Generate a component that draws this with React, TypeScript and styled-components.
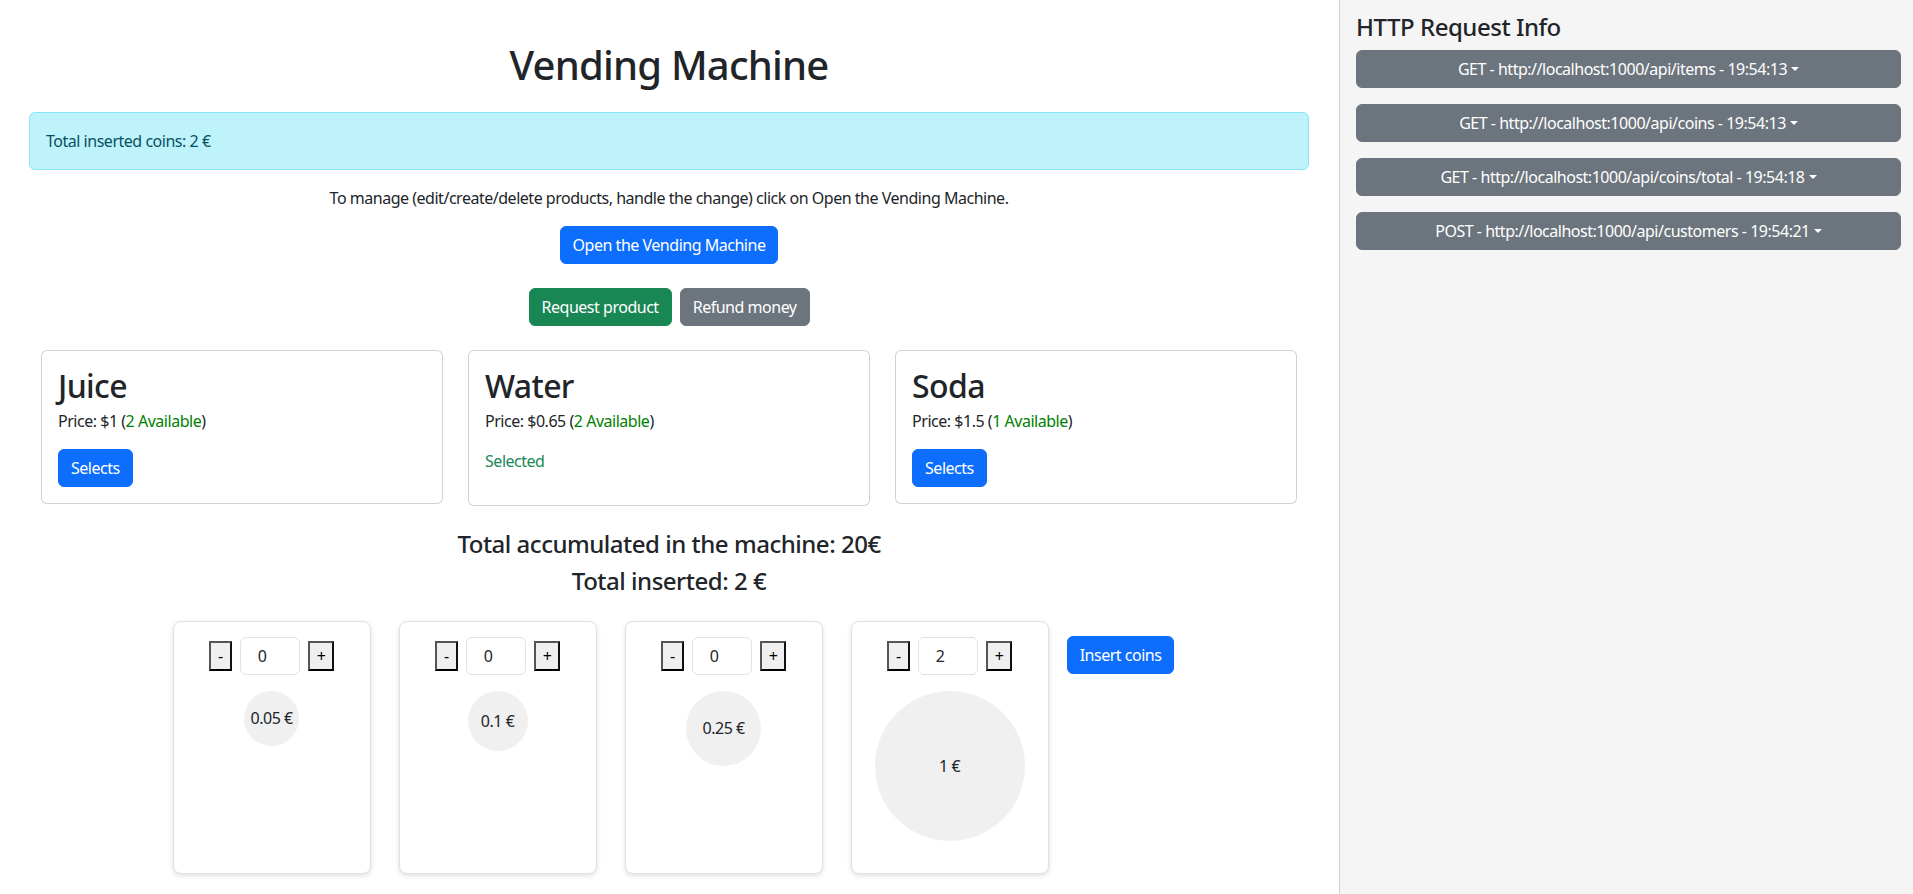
import React from 'react';
import styled, { createGlobalStyle } from 'styled-components';

const colors = {
  text: '#212529',
  primary: '#0d6efd',
  success: '#198754',
  secondary: '#6c757d',
  border: 'rgba(0, 0, 0, 0.175)',
  sidebar: '#f5f5f5',
};

const GlobalStyle = createGlobalStyle`
  * {
    box-sizing: border-box;
  }

  body {
    margin: 0;
    font-family: 'Noto Sans', 'Open Sans', sans-serif;
    font-size: 16px;
    line-height: 1.5;
    letter-spacing: -0.03em;
    color: ${colors.text};
    background: #fff;
  }

  button,
  input {
    letter-spacing: inherit;
  }
`;

const Layout = styled('div')`
  display: grid;
  grid-template-columns: 70% 30%;
  min-height: 100vh;
`;

const Main = styled('main')`
  padding: 41px 30px 16px 29px;
`;

const Title = styled('h1')`
  margin: 0 0 23px;
  font-size: 40px;
  font-weight: 500;
  line-height: 1.2;
  letter-spacing: -0.02em;
  text-align: center;
`;

const Alert = styled('div')`
  padding: 16px;
  margin-bottom: 16px;
  border: 1px solid #86e5f7;
  border-radius: 6px;
  background: #bff3fc;
  color: #055160;
`;

const Hint = styled('p')`
  margin: 0 0 16px;
  text-align: center;
`;

const ButtonRow = styled('div')`
  display: flex;
  justify-content: center;
  gap: 8px;
  margin-bottom: 24px;
`;

type Variant = 'primary' | 'success' | 'secondary';

const Button = styled('button')<{ $variant: Variant }>`
  display: inline-block;
  padding: 6px 12px;
  border: 1px solid ${props => colors[props.$variant]};
  border-radius: 6px;
  background: ${props => colors[props.$variant]};
  color: #fff;
  font-family: inherit;
  font-size: 16px;
  line-height: 24px;
  cursor: pointer;
`;

const ProductGrid = styled('div')`
  display: grid;
  grid-template-columns: repeat(3, 1fr);
  gap: 25px;
  align-items: start;
  margin: 0 12px 24px;
`;

const Card = styled('div')`
  padding: 16px;
  border: 1px solid ${colors.border};
  border-radius: 6px;
  background: #fff;
`;

const CardTitle = styled('h2')`
  margin: 0 0 4px;
  font-size: 32px;
  font-weight: 500;
  line-height: 1.2;
  letter-spacing: -0.02em;
`;

const CardText = styled('p')`
  margin: 0 0 16px;
`;

const Available = styled('span')`
  color: green;
`;

const SelectedText = styled('p')`
  margin: 0 0 16px;
  color: ${colors.success};
`;

const Total = styled('h4')`
  margin: 0 0 8px;
  font-size: 24px;
  font-weight: 500;
  line-height: 1.2;
  letter-spacing: -0.02em;
  text-align: center;
`;

const CoinRow = styled('div')`
  display: flex;
  justify-content: center;
  align-items: stretch;
  gap: 28px;
  margin-top: 25px;
  padding-left: 9px;
`;

const CoinCard = styled('div')`
  display: flex;
  flex-direction: column;
  align-items: center;
  width: 198px;
  padding: 15px 16px 16px;
  border: 1px solid #dee2e6;
  border-radius: 8px;
  background: #fff;
  box-shadow: 0 2px 5px rgba(0, 0, 0, 0.12);
`;

const Controls = styled('div')`
  display: flex;
  align-items: center;
  gap: 8px;
`;

const StepButton = styled('button')`
  min-width: 23px;
  height: 30px;
  padding: 0 7px;
  border: 2px solid;
  border-color: #555 #111 #000 #555;
  background: #efefef;
  color: #000;
  font-family: inherit;
  font-size: 16px;
  line-height: 1;
`;

const CountInput = styled('input')`
  width: 60px;
  height: 38px;
  padding: 6px 8px 6px 17px;
  border: 1px solid #dee2e6;
  border-radius: 6px;
  color: ${colors.text};
  font-family: inherit;
  font-size: 16px;
`;

const Coin = styled('div')`
  display: flex;
  align-items: center;
  justify-content: center;
  margin: 16px 0;
  border-radius: 50%;
  background: #f0f0f0;
  font-size: 16px;
`;

const InsertButton = styled(Button)`
  align-self: flex-start;
  margin: 15px 0 0 -10px;
`;

const Sidebar = styled('aside')`
  padding: 13px 12px 13px 16px;
  border-left: 1px solid #cfcfcf;
  background: ${colors.sidebar};
`;

const SidebarTitle = styled('h4')`
  margin: 0 0 8px;
  font-size: 24px;
  font-weight: 500;
  line-height: 1.2;
  letter-spacing: -0.02em;
`;

const RequestToggle = styled('button')`
  display: block;
  width: 100%;
  margin-bottom: 16px;
  padding: 6px 12px;
  border: 1px solid ${colors.secondary};
  border-radius: 6px;
  background: ${colors.secondary};
  color: #fff;
  font-family: inherit;
  font-size: 16px;
  line-height: 24px;
  text-align: center;

  &::after {
    content: '';
    display: inline-block;
    margin-left: 0.255em;
    vertical-align: 0.255em;
    border-top: 0.3em solid;
    border-right: 0.3em solid transparent;
    border-left: 0.3em solid transparent;
  }
`;

const products = [
  { name: 'Juice', price: 1, available: 2, selected: false },
  { name: 'Water', price: 0.65, available: 2, selected: true },
  { name: 'Soda', price: 1.5, available: 1, selected: false },
];

const coins = [
  { value: 0.05, count: 0 },
  { value: 0.1, count: 0 },
  { value: 0.25, count: 0 },
  { value: 1, count: 2 },
];

const requests = [
  'GET - http://localhost:1000/api/items - 19:54:13',
  'GET - http://localhost:1000/api/coins - 19:54:13',
  'GET - http://localhost:1000/api/coins/total - 19:54:18',
  'POST - http://localhost:1000/api/customers - 19:54:21',
];

const App: React.FC = () => (
  <>
    <GlobalStyle />
    <Layout>
      <Main>
        <Title>Vending Machine</Title>
        <Alert>Total inserted coins: 2 €</Alert>
        <Hint>To manage (edit/create/delete products, handle the change) click on Open the Vending Machine.</Hint>
        <ButtonRow>
          <Button $variant="primary">Open the Vending Machine</Button>
        </ButtonRow>
        <ButtonRow>
          <Button $variant="success">Request product</Button>
          <Button $variant="secondary">Refund money</Button>
        </ButtonRow>

        <ProductGrid>
          {products.map(p => (
            <Card key={p.name}>
              <CardTitle>{p.name}</CardTitle>
              <CardText>
                Price: ${p.price} (<Available>{p.available} Available</Available>)
              </CardText>
              {p.selected ? (
                <SelectedText>Selected</SelectedText>
              ) : (
                <Button $variant="primary">Selects</Button>
              )}
            </Card>
          ))}
        </ProductGrid>

        <Total>Total accumulated in the machine: 20€</Total>
        <Total>Total inserted: 2 €</Total>

        <CoinRow>
          {coins.map(c => {
            const size = 50 + c.value * 100;
            return (
              <CoinCard key={c.value}>
                <Controls>
                  <StepButton>-</StepButton>
                  <CountInput type="text" defaultValue={c.count} />
                  <StepButton>+</StepButton>
                </Controls>
                <Coin style={{ width: size, height: size }}>{c.value} €</Coin>
              </CoinCard>
            );
          })}
          <InsertButton $variant="primary">Insert coins</InsertButton>
        </CoinRow>
      </Main>

      <Sidebar>
        <SidebarTitle>HTTP Request Info</SidebarTitle>
        {requests.map(r => (
          <RequestToggle key={r}>{r}</RequestToggle>
        ))}
      </Sidebar>
    </Layout>
  </>
);

export default App;
